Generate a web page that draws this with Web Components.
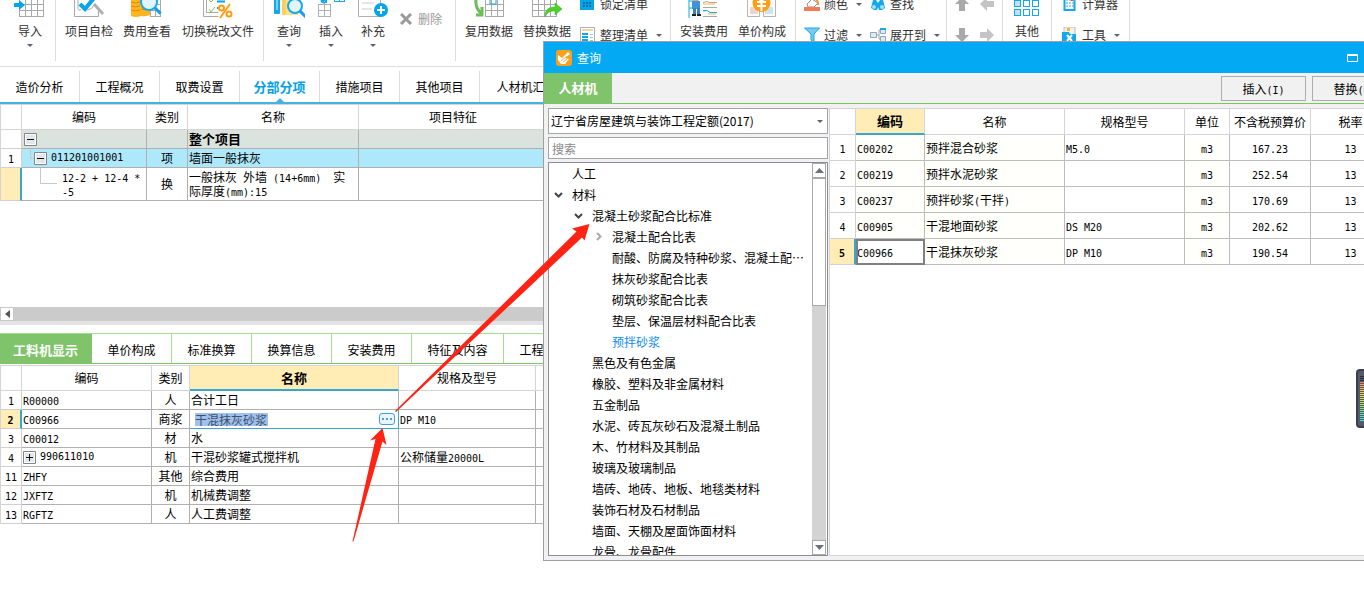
<!DOCTYPE html>
<html lang="zh-CN">
<head>
<meta charset="utf-8">
<title>分部分项</title>
<style>
html,body{margin:0;height:100%;overflow:hidden;background:#fff}
body{font:12px/16px "Noto Sans CJK SC",sans-serif;color:#000}
</style>
</head>
<body>
<cost-app></cost-app>
<script>
const RESET = `*{box-sizing:border-box}
button,input,select{font:inherit;color:inherit;margin:0;padding:0;border:0;background:none;border-radius:0}
svg{display:block}
.m{font-family:"DejaVu Sans Mono",monospace;font-size:10px;line-height:10px}`;
const latin = t => String(t).replace(/[\x20-\x7e]+/g, s => `<span class="m">${s}</span>`);
const define = (name, render) => customElements.define(name, class extends HTMLElement {
  connectedCallback() {
    if (this.shadowRoot) return;
    this.attachShadow({ mode: 'open' }).innerHTML = `<style>${RESET}</style>` + render(this);
  }
});

/* ---------- ribbon ---------- */
const grid = (x, y, c, r, w, h, col = '#a9a9a9') => {
  let d = '';
  for (let i = 0; i <= c; i++) d += `M${x + i * w + .5} ${y}v${r * h + 1}`;
  for (let i = 0; i <= r; i++) d += `M${x} ${y + i * h + .5}h${c * w + 1}`;
  return `<path d="${d}" fill="none" stroke="${col}"/>`;
};
const lens = (x, y, r, handle = '#1e9be6') => `<circle cx="${x}" cy="${y}" r="${r}" fill="#e4f4fd" stroke="#12a9ec" stroke-width="2"/><path d="M${x + r * .7} ${y + r * .7}l6 6" stroke="${handle}" stroke-width="3"/>`;
const BIG = {
  import: grid(5, -2, 4, 3, 6, 6) + '<path d="M0 3h5V0l6 5-6 5V7H0z" fill="#00a5ea"/>',
  check: '<path d="M1.500 -2v18.500h24V9M5 -1v10M5 10h3" fill="none" stroke="#a9a9a9"/><path d="M7 4l5 5 9-11" fill="none" stroke="#00a5ea" stroke-width="4"/><path d="M21 4l9 10" stroke="#b0b0b0" stroke-width="3"/><path d="M14 10q5 0 8-6" fill="none" stroke="#a9a9a9"/>',
  fee: grid(19, -2, 2, 3, 5, 6) + '<path d="M0 0h9v-3h10v18q-5 2-9 1-5 2-10 0z" fill="#ffb420"/><path d="M0 2q5 2 9 0M0 6q5 2 9 0M0 10q5 2 9 0M10 1q5 2 9 0M10 5q5 2 9 0M10 9q5 2 9 0" fill="none" stroke="#e08a00"/>' + lens(18, 2, 8),
  tax: '<path d="M1.500 -2v18.500h15M4.500 -2v14.500h12" fill="none" stroke="#a9a9a9"/><path d="M7 0l2 2 4-4M7 9l2 3 4-5" fill="none" stroke="#8ac34a"/><path d="M15 1.500h8M15 8h3" stroke="#00a5ea" stroke-width="2"/><circle cx="19.500" cy="8" r="2.500" fill="none" stroke="#ff9c10" stroke-width="2"/><circle cx="27" cy="14" r="2.500" fill="none" stroke="#ff9c10" stroke-width="2"/><path d="M28 4L18 18" stroke="#ff9c10" stroke-width="2"/>',
  query: '<rect x="1" y="-4" width="6" height="18" rx="1" fill="#12a9ec"/><rect x="3" y="0" width="2" height="10" fill="#7bd0f5"/><path d="M9 -3h16v18H9z" fill="#ffe08a"/><path d="M9 0v15h4V0z" fill="#ffcf5c"/>' + lens(22, 6, 7),
  insert: grid(3, 4, 2, 2, 6, 6, '#b0b0b0') + grid(19, -4, 2, 1, 5, 5, '#12a9ec') + '<path d="M7 0h4M11 -1v4M6 1l4-3M6 1l4 2" stroke="#12a9ec" stroke-width="2"/>',
  add: '<path d="M1.500 -2v18.500h22V-2" fill="none" stroke="#b0b0b0"/><path d="M5 3h12M5 9h10" stroke="#ccc"/><circle cx="24" cy="10" r="7" fill="#00a5ea"/><path d="M20 10h8M24 6v8" stroke="#fff" stroke-width="2"/>',
  reuse: grid(12, -2, 3, 3, 6, 6) + '<rect x="17" y="-1" width="6" height="5" fill="none" stroke="#12a9ec"/><path d="M3 -1q-1 9 5 14M3 15h6V7" fill="none" stroke="#6cbc5a" stroke-width="3"/>',
  replace: grid(1, -2, 4, 3, 6, 6) + '<path d="M14 17q0-11 10-10V3l7 6-7 6v-4q-7-1-10 6z" fill="#4fcf2c" stroke="#35ac1c" stroke-width=".5"/>',
  worker: '<path d="M1 -1v19M1 8h9M1 1h7" stroke="#12a9ec"/><circle cx="8" cy="-1" r="3" fill="#d9a58a"/><path d="M4 1h8v8H4z" fill="#3f93d8"/><path d="M5 8h3v7H5zM9 8h3v7H9z" fill="#3b82c4"/><path d="M4 15h4M9 15h4" stroke="#222" stroke-width="2"/><path d="M15 2.500q5-2 6 0h8M15 7.500h14M15 16.500h14" fill="none" stroke="#a9a9a9"/><path d="M15 4h12M15 11h3M20 14h8" stroke="#ffb430"/><path d="M15 10.500h4l3 2h7" fill="none" stroke="#12a9ec"/>',
  price: '<path d="M1.500 -2v18.500h12V5M17.500 6v10.500h12V-2" fill="none" stroke="#b5b5b5"/><path d="M4 7h8v7H4z" fill="#eed2d2"/><path d="M19 7h8v7h-8z" fill="#cde2f2"/><circle cx="15.500" cy="3" r="9" fill="#ff9f16"/><path d="M11 2h9M11 6h9M15.500 1v10M12 -2l3.500 3L19-2" stroke="#fff" stroke-width="2" fill="none"/>',
  other: [3, 12, 21].map((x, i) => [-8, 0, 9].map(y => `<rect x="${x + .5}" y="${y + .5}" width="6" height="6" fill="${i ? '#fff' : '#c4def2'}" stroke="#12a9ec"/>`).join('')).join('')
};
const SMALL = {
  lock: '<path d="M0 0h14v14H0z" fill="#00a5ea"/><path d="M3 7h2M6 7h2M9 7h2M3 10h2M6 10h2M9 10h2" stroke="#0d72a8" stroke-width="2"/>',
  tidy: '<path d="M.5 .5h14v14H.5z" fill="#fff" stroke="#b0b0b0"/><path d="M2 3h11" stroke="#f2d7a5" stroke-width="2"/><path d="M2 7h6M2 10h6M2 13h6" stroke="#12a9ec" stroke-width="2"/><path d="M10 7.500h3M10 10.500h3M10 13.500h3" stroke="#90c8ea"/>',
  fill: '<path d="M3 8L8 3l6 4-4 4H4z" fill="#fff" stroke="#909090"/><path d="M12 4q3 2 2 5" stroke="#f39a3c" stroke-width="2" fill="none"/><path d="M0 11h16v4H0z" fill="#f37c58"/>',
  funnel: '<path d="M.5 1h15L10 7v8l-3-2V7z" fill="#7cc9ee" stroke="#12a9ec"/>',
  find: '<path d="M1 12l2-8h3l2 3 2-3h3l2 8-3 2h-3l-1-3-1 3H4z" fill="#12a9ec"/><circle cx="4" cy="11" r="2" fill="#a8e0fa"/><circle cx="12" cy="11" r="2" fill="#a8e0fa"/>',
  expand: '<path d="M.5 5.500h6v5h-6zM10.500 1.500h5v5h-5zM10.500 9.500h5v5h-5z" fill="#dceaf3" stroke="#8ba7ba"/><path d="M6 8h3M9 3v9M9 3h2M9 12h2" stroke="#a0a0a0" fill="none"/><path d="M10 2h6" stroke="#12a9ec" stroke-width="2"/>',
  calc: '<path d="M2.500 0h10v14h-10z" fill="#fff" stroke="#12a9ec" stroke-width="2"/><path d="M4 4h8M4 7h8M4 10h8" stroke="#3c9fd8" stroke-dasharray="2 1"/><path d="M9 4h2" stroke="#f04030" stroke-width="2"/>',
  tool: '<path d="M2 0h11v8H2z" fill="#f2f2f2" stroke="#bbb"/><path d="M5 1h3v3H5z" fill="#ffb430"/><path d="M0 5h7l1 2h6v9H0z" fill="#12a9ec"/><path d="M5 8l5 6M10 8l-5 6" stroke="#fff" stroke-width="2"/>'
};
define('ribbon-group', () => `<style>:host{display:flex;height:61px;border-right:1px solid #dcdcdc;flex:none}</style><slot></slot>`);
define('ribbon-button', el => `<style>:host{display:block;flex:none}
button{display:flex;flex-direction:column;align-items:center;width:100%;color:#333;white-space:nowrap}
svg{width:32px;height:20px}span{margin-top:2px;line-height:18px}
i{border:3px solid transparent;border-top-color:#606070;border-bottom:0;margin-top:4px}</style>
<button type="button"><svg viewBox="0 0 32 20">${BIG[el.getAttribute('icon')]}</svg><span><slot></slot></span>${el.hasAttribute('menu') ? '<i></i>' : ''}</button>`);
define('ribbon-small', el => `<style>:host{display:block;flex:none}
button{display:flex;align-items:center;height:16px;gap:4px;color:#333;white-space:nowrap}
svg{width:16px;height:16px}i{border:3px solid transparent;border-top-color:#606070;border-bottom:0;margin-left:4px}</style>
<button type="button"><svg viewBox="0 0 16 16">${SMALL[el.getAttribute('icon')]}</svg><slot></slot>${el.hasAttribute('menu') ? '<i></i>' : ''}</button>`);
define('app-ribbon', () => `<style>
:host{display:flex;height:67px;overflow:hidden;border-bottom:1px solid #dcdcdc;background:#fff}
.w48{width:48px}.w58{width:58px}.w84{width:84px}.w42{width:42px}
.g1{padding:0 1px 0 6px}.g2{padding:0 3px 0 4px}.g3{padding:0 13px 0 4px}.g4{padding:0 8px 0 4px}.g5{padding:0 4px}
.g6{padding-left:8px;width:151px}.g9{padding-left:10px;width:78px}
.col{display:grid;grid-auto-rows:16px;row-gap:15px;margin-top:-4px;padding-left:4px}
.g6 .col,.g9 .col{padding:0}.g6 .col:first-child{width:66px}
.del{display:flex;align-items:center;gap:6px;height:16px;margin:11px 0 0 6px;color:#999}
.arrows{display:grid;grid-template-columns:25px 25px;row-gap:15px;grid-auto-rows:16px;margin-top:-4px;padding:0 3px 0 2px;width:55px;justify-items:center}
</style>
<ribbon-group class="g1"><ribbon-button class="w48" icon="import" menu>导入</ribbon-button></ribbon-group>
<ribbon-group class="g2"><ribbon-button class="w58" icon="check">项目自检</ribbon-button><ribbon-button class="w58" icon="fee">费用查看</ribbon-button><ribbon-button class="w84" icon="tax">切换税改文件</ribbon-button></ribbon-group>
<ribbon-group class="g3"><ribbon-button class="w42" icon="query" menu>查询</ribbon-button><ribbon-button class="w42" icon="insert" menu>插入</ribbon-button><ribbon-button class="w42" icon="add" menu>补充</ribbon-button>
<button type="button" class="del"><svg width="12" height="12"><path d="M1 1l10 10M11 1L1 11" stroke="#9a9a9a" stroke-width="3"/></svg>删除</button></ribbon-group>
<ribbon-group class="g4"><ribbon-button class="w58" icon="reuse">复用数据</ribbon-button><ribbon-button class="w58" icon="replace">替换数据</ribbon-button><div class="col"><ribbon-small icon="lock">锁定清单</ribbon-small><ribbon-small icon="tidy" menu>整理清单</ribbon-small></div></ribbon-group>
<ribbon-group class="g5"><ribbon-button class="w58" icon="worker">安装费用</ribbon-button><ribbon-button class="w58" icon="price">单价构成</ribbon-button></ribbon-group>
<ribbon-group class="g6"><div class="col"><ribbon-small icon="fill" menu>颜色</ribbon-small><ribbon-small icon="funnel" menu>过滤</ribbon-small></div><div class="col"><ribbon-small icon="find">查找</ribbon-small><ribbon-small icon="expand" menu>展开到</ribbon-small></div></ribbon-group>
<ribbon-group><div class="arrows">${[['上移', 0, '#a9a9a9'], ['升级', 270, '#c4c4c4'], ['下移', 180, '#a9a9a9'], ['降级', 90, '#c4c4c4']].map(([l, r, c]) => `<button type="button" aria-label="${l}"><svg width="16" height="16" viewBox="0 0 16 16"><path transform="rotate(${r} 8 8)" d="M8 1l7 7h-4v7H5V8H1z" fill="${c}"/></svg></button>`).join('')}</div></ribbon-group>
<ribbon-group><ribbon-button class="w48" icon="other">其他</ribbon-button></ribbon-group>
<ribbon-group class="g9"><div class="col"><ribbon-small icon="calc">计算器</ribbon-small><ribbon-small icon="tool" menu>工具</ribbon-small></div></ribbon-group>`);

/* ---------- tab strips ---------- */
define('main-tabs', () => `<style>
:host{display:block;border-bottom:2px solid #45b3e0;padding-top:4px}
nav{display:flex;height:31px;overflow:hidden}
a{display:flex;align-items:center;justify-content:center;flex:none;width:80px;border-right:1px solid #dcdcdc;color:#000;text-decoration:none;padding-top:1px;position:relative}
a:last-child{width:94px}
a.on{color:#03a0e8;font-weight:bold;font-size:13px;padding:0}
a.on::after{content:"";position:absolute;bottom:0;border:4px solid transparent;border-top:0;border-bottom-color:#45b3e0}
</style><nav>${['造价分析', '工程概况', '取费设置', '分部分项', '措施项目', '其他项目', '人材机汇总'].map((t, i) => `<a href="#"${i === 3 ? ' class="on"' : ''}>${t}</a>`).join('')}</nav>`);
define('detail-tabs', () => `<style>
:host{display:block;border-top:1px solid #a5dc8e;border-bottom:1px solid #7fc36a}
nav{display:flex;height:29px;overflow:hidden}
a{display:flex;align-items:center;justify-content:center;flex:none;width:80px;border-right:1px solid #a5dc8e;color:#000;text-decoration:none;padding-top:2px}
a:nth-child(n+6){width:92px}
a.on{width:92px;color:#fff;font-weight:bold;font-size:13px;background:#7fc36a;border-color:#7fc36a}
</style><nav>${['工料机显示', '单价构成', '标准换算', '换算信息', '安装费用', '特征及内容', '工程量明细'].map((t, i) => `<a href="#"${i ? '' : ' class="on"'}>${t}</a>`).join('')}</nav>`);

/* ---------- data grids ---------- */
const BOX = plus => `<svg class="box" width="13" height="13" viewBox="0 0 13 13"><path d="M.5.500h12v12H.5z" fill="#fff" stroke="#858585"/><path d="M2 2h9v9H2z" fill="#e3e6ea"/><path d="M3 6.500h7${plus ? 'M6.500 3v7' : ''}" stroke="#111"/></svg>`;
const gridTable = g => `<table><colgroup>${g.cols.map(c => `<col style="width:${c[1]}px">`).join('')}</colgroup>
<thead><tr>${g.cols.map((c, i) => `<th${i === g.on ? ' class="on"' : ''}>${c[0]}</th>`).join('')}</tr></thead>
<tbody>${g.rows.map(r => `<tr class="${r.cls || ''}">${r.cells.map((c, i) => `<td class="${g.left.includes(i) ? 'l' : ''} c${i}">${c && c.html ? c.html : latin(c)}</td>`).join('')}</tr>`).join('')}</tbody></table>`;
const GRID = `:host{display:block}
table{table-layout:fixed;width:0;border-collapse:separate;border-spacing:0;border-top:1px solid #d5d5d5}
th{height:25px;font-weight:normal;border:solid #d5d5d5;border-width:0 1px 1px 0;padding:0;white-space:nowrap;overflow:hidden}
th.on{background:#ffedb5;font-weight:bold;font-size:13px;border-bottom:2px solid #38a6d2}
td{height:19px;line-height:14px;border:solid #b0b0b0;border-width:0 1px 1px 0;padding:0 1px;text-align:center;white-space:pre;overflow:hidden}
td.l{text-align:left}td.c0{border-color:#d0d0d0;padding:0}
.sel .c0{background:#ffedb5;font-weight:bold;border-right:2px solid #38a6d2}
.t{display:flex;align-items:center}`;
define('bill-grid', () => `<style>${GRID}
table{border-left:1px solid #d5d5d5}
.sum td{background:#dae3de}.sum .c0{background:#fff}.sum .c3{font-weight:bold;font-size:13px}
.item td{background:#aee8fb}.item .c0{background:#fff}
.sel td{height:33px}td.c1{padding:0}
.t svg{flex:none}.b1{margin-left:2px}.b2{margin-right:4px}</style>` + gridTable({
  cols: [['', 21], ['编码', 125], ['类别', 41], ['名称', 171], ['项目特征', 189]], left: [1, 3], rows: [
    { cls: 'sum', cells: ['', { html: `<div class="t"><span class="b1">${BOX()}</span></div>` }, '', '整个项目', ''] },
    { cls: 'item', cells: ['1', { html: `<div class="t"><svg width="12" height="18"><path d="M8.500 0v9.500H12" fill="none" stroke="#c8c8c8"/></svg><span class="b2">${BOX()}</span>${latin('011201001001')}</div>` }, '项', '墙面一般抹灰', ''] },
    { cls: 'sel', cells: ['', { html: `<div class="t"><svg width="40" height="32"><path d="M18.500 0v15.500H35" fill="none" stroke="#c8c8c8"/></svg><div>${latin('12-2 + 12-4 *')}<br>${latin('-5')}</div></div>` }, '换', { html: latin('一般抹灰 外墙 (14+6mm)  实') + '<br>' + latin('际厚度(mm):15') }, ''] }]
}));
define('resource-grid', () => `<style>${GRID}
table{border-left:1px solid #d5d5d5}
.sel .c3{border:solid #38a6d2;border-width:0 1px 1px 0}
.b{margin-right:4px}.edit{display:flex;align-items:center;padding-left:4px}
input{width:73px;height:13px;line-height:13px;background:#9fc1ef;color:#40506a}
.more{width:16px;height:12px;border:1px solid #4b9fe0;border-radius:3px;background:#eaf5fd;margin:0 2px 0 auto;display:grid;place-items:center}</style>` + gridTable({
  cols: [['', 21], ['编码', 130], ['类别', 38], ['名称', 209], ['规格及型号', 137], ['', 60]], left: [1, 3, 4], on: 3, rows: [
    { cells: ['1', 'R00000', '人', '合计工日', '', ''] },
    { cls: 'sel', cells: ['2', 'C00966', '商浆', { html: `<div class="edit"><input aria-label="名称" value="干混抹灰砂浆"><button type="button" class="more" aria-label="选择"><svg width="10" height="2"><path d="M0 0h2v2H0zM4 0h2v2H4zM8 0h2v2H8z" fill="#4b9fe0"/></svg></button></div>` }, 'DP M10', ''] },
    { cells: ['3', 'C00012', '材', '水', '', ''] },
    { cells: ['4', { html: `<div class="t"><span class="b">${BOX(1)}</span>${latin('990611010')}</div>` }, '机', '干混砂浆罐式搅拌机', '公称储量20000L', ''] },
    { cells: ['11', 'ZHFY', '其他', '综合费用', '', ''] },
    { cells: ['12', 'JXFTZ', '机', '机械费调整', '', ''] },
    { cells: ['13', 'RGFTZ', '人', '人工费调整', '', ''] }]
}));
define('quota-grid', () => `<style>${GRID}
th,td{height:26px}td{border-color:#bdbdbd}
.c1,.c2,.c4{background:#fffffb}
.sel .c1{outline:2px solid #808080;outline-offset:-2px;background:#fff}</style>` + gridTable({
  cols: [['', 26], ['编码', 69], ['名称', 140], ['规格型号', 120], ['单位', 45], ['不含税预算价', 81], ['税率', 80]], left: [1, 2, 3], on: 1, rows: [
    { cells: ['1', 'C00202', '预拌混合砂浆', 'M5.0', 'm3', '167.23', '13'] },
    { cells: ['2', 'C00219', '预拌水泥砂浆', '', 'm3', '252.54', '13'] },
    { cells: ['3', 'C00237', '预拌砂浆(干拌)', '', 'm3', '170.69', '13'] },
    { cells: ['4', 'C00905', '干混地面砂浆', 'DS M20', 'm3', '202.62', '13'] },
    { cls: 'sel', cells: ['5', 'C00966', '干混抹灰砂浆', 'DP M10', 'm3', '190.54', '13'] }]
}));

/* ---------- material tree ---------- */
const DOWN = '<svg width="9" height="6"><path d="M1 1l3.500 3.500L8 1" fill="none" stroke="#444" stroke-width="2"/></svg>';
const RIGHT = '<svg width="9" height="9"><path d="M3 1l3.500 3.500L3 8" fill="none" stroke="#aaa" stroke-width="2"/></svg>';
const TREE = [[1, '人工'], [1, '材料', DOWN], [2, '混凝土砂浆配合比标准', DOWN], [3, '混凝土配合比表', RIGHT], [3, '耐酸、防腐及特种砂浆、混凝土配⋯'], [3, '抹灰砂浆配合比表'], [3, '砌筑砂浆配合比表'], [3, '垫层、保温层材料配合比表'], [3, '预拌砂浆', '', 1], [2, '黑色及有色金属'], [2, '橡胶、塑料及非金属材料'], [2, '五金制品'], [2, '水泥、砖瓦灰砂石及混凝土制品'], [2, '木、竹材料及其制品'], [2, '玻璃及玻璃制品'], [2, '墙砖、地砖、地板、地毯类材料'], [2, '装饰石材及石材制品'], [2, '墙面、天棚及屋面饰面材料'], [2, '龙骨、龙骨配件']];
define('material-tree', () => `<style>
:host{display:flex;border:1px solid #8a8d96;background:#fff;min-height:0;overflow:hidden}
ul{flex:1;min-width:0;list-style:none;margin:0;padding:0;overflow:hidden}
li{display:flex;align-items:center;height:21px;white-space:nowrap;padding-left:5px}
.l2{padding-left:25px}.l3{padding-left:45px}
li i{display:grid;width:9px;margin-right:9px}.on{color:#0c8cf0}
.bar{display:flex;flex-direction:column;width:14px;margin-right:1px;background:#d3d3d3}
.bar button{height:15px;border:1px solid #a8a8a8;background:#fff;display:grid;place-items:center;flex:none}
.bar span{height:128px;border:1px solid #a8a8a8;background:#fff;margin-bottom:auto}
</style><ul>${TREE.map(([l, t, ic, on]) => `<li class="l${l}${on ? ' on' : ''}"><i>${ic || ''}</i>${t}</li>`).join('')}</ul>
<div class="bar"><button type="button" aria-label="向上"><svg width="9" height="5"><path d="M0 5l4.500-5L9 5z" fill="#6d7080"/></svg></button><span></span><button type="button" aria-label="向下"><svg width="9" height="5"><path d="M0 0l4.500 5L9 0z" fill="#6d7080"/></svg></button></div>`);

/* ---------- query window ---------- */
define('query-window', () => `<style>
:host{display:flex;flex-direction:column;border:1px solid #a0a0a0;background:#f1f1f1}
header{display:flex;align-items:center;height:31px;background:#03a9f2;color:#fff;padding:0 41px 0 12px;gap:5px}
header button{margin-left:auto}
.tools{display:flex;height:31px;border-bottom:1px solid #7fc36a;padding-right:2px;gap:6px;flex:none}
.tools a{width:68px;background:#7fc36a;color:#fff;text-decoration:none;font-weight:bold;font-size:13px;display:grid;place-items:center;margin-right:auto}
.tools button{width:85px;height:25px;margin-top:3px;border:1px solid #adadad;background:#f1f1f1}
.body{display:flex;flex:1;min-height:0;padding:4px 0 4px 4px;gap:1px}
.side{display:flex;flex-direction:column;width:280px;flex:none;gap:3px}
.combo{position:relative;display:block}
.combo::after{content:"";position:absolute;right:5px;top:12px;border:3px solid transparent;border-top-color:#606070;border-bottom:0}
select{appearance:none;display:block;width:100%;height:26px;border:1px solid #a0a5aa;background:#fff;padding-left:2px}
input{width:100%;height:22px;border:1px solid #a0a5aa;background:#fff;padding:0 3px;flex:none}
input::placeholder{color:#888}
material-tree{flex:1}
.result{flex:1;min-width:0;border:solid #d5d5d5;border-width:0 0 1px 1px;background:#fff}
</style>
<header><svg width="16" height="16" viewBox="0 0 16 16"><rect width="16" height="16" rx="3" fill="#f9a11b"/><path d="M2 5l4 3 6-6 2 2-5 4 4 1-4 5H5l-3-4z" fill="#fff"/><path d="M5 11l6-5M7 12l4-3" stroke="#f0b050"/></svg>查询
<button type="button" aria-label="最小化"><svg width="11" height="8"><path d="M.5.500h10v7H.5zM0 1.500h11" fill="none" stroke="#fff"/></svg></button></header>
<div class="tools"><a href="#">人材机</a><button type="button">插入${latin('(I)')}</button><button type="button">替换${latin('(R)')}</button></div>
<div class="body"><div class="side">
<label class="combo"><select aria-label="定额库"><option>辽宁省房屋建筑与装饰工程定额(2017)</option></select></label>
<input type="search" aria-label="搜索" placeholder="搜索">
<material-tree></material-tree></div>
<div class="result"><quota-grid></quota-grid></div></div>`);

/* ---------- annotation arrows and volume meter ---------- */
define('arrow-overlay', () => `<style>:host{display:block;pointer-events:none}</style>
<svg width="600" height="560"><g fill="#ff2314"><path d="M589.500 224L572 228.500l4.500 3L395 411l1 1L582 237.500l2.500 3z"/><path d="M382.500 428L370 440.500l5.500-1.500L352.500 541.500h1L382.500 441.500l4 3.500z"/></g></svg>`);
define('volume-meter', () => `<style>:host{display:block;border:2px solid #3d404c;border-right:0;border-radius:4px 0 0 4px;background:#565b6c;padding:5px 0 0 2px}
i{display:block;height:1px;margin-bottom:1px}</style>${['#2c2e36', '#2c2e36', '#2c2e36', '#f07860', '#f59a50', '#f5a848', '#f3b840', '#f0c840', '#ecd040', '#e8d848', '#e4e048', '#d8e048', '#c8e050', '#b8e058', '#a8e060', '#98e068', '#88e078', '#78e090', '#68e0a0', '#60e0b0', '#58dcc0', '#50d8c8', '#50d8d0'].map(c => `<i style="background:${c}"></i>`).join('')}`);

define('cost-app', () => `<style>
:host{display:block;position:relative;min-height:100vh;overflow:hidden;background:#fff}
.bills{height:203px;overflow:hidden}
.scroll{display:flex;height:14px;background:#cbcbcb}
.scroll button{width:14px;background:#fff;border:1px solid #c8c8c8;display:grid;place-items:center}
.split{height:4px;background:#e3e3e3;margin-bottom:8px}
detail-tabs{margin-bottom:1px}
query-window{position:absolute;left:543px;right:-36px;top:41px;height:520px}
arrow-overlay{position:absolute;left:0;top:0}
volume-meter{position:absolute;right:0;top:369px;width:8px;height:59px}
</style>
<app-ribbon></app-ribbon><main-tabs></main-tabs>
<div class="bills"><bill-grid></bill-grid></div>
<div class="scroll"><button type="button" aria-label="向左"><svg width="5" height="8"><path d="M5 0v8L0 4z" fill="#555"/></svg></button></div>
<div class="split"></div>
<detail-tabs></detail-tabs><resource-grid></resource-grid>
<query-window></query-window><arrow-overlay></arrow-overlay><volume-meter></volume-meter>`);
</script>
</body>
</html>
